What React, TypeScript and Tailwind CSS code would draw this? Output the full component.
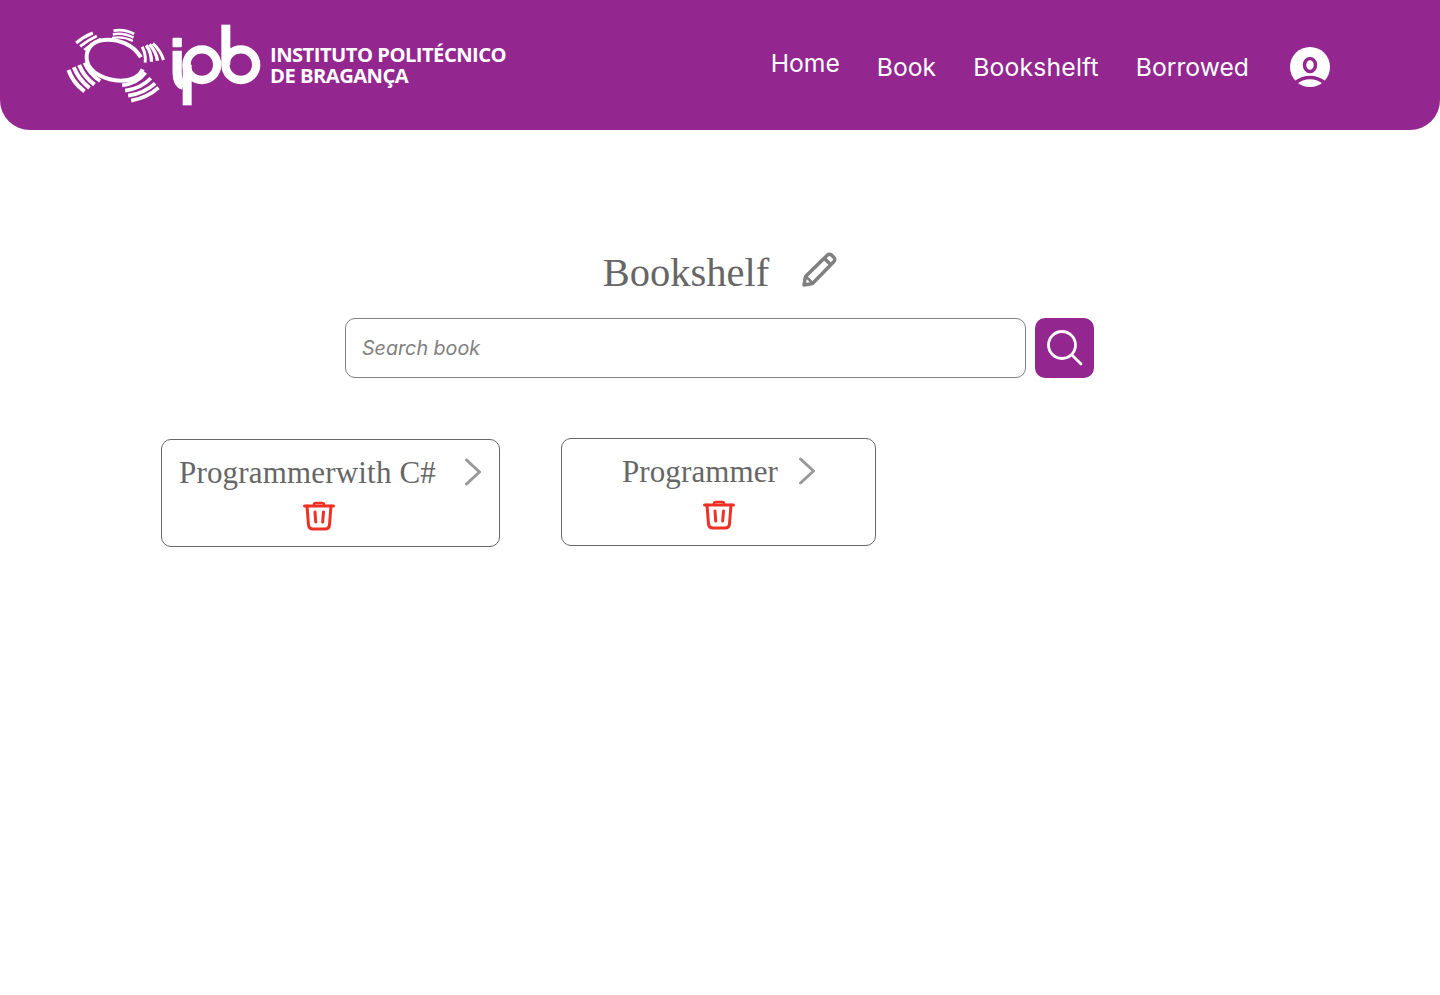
import React from "react";

const sans = "font-['Inter','Liberation_Sans',sans-serif]";
const serif = "font-['Liberation_Serif','DejaVu_Serif',serif]";

function Logo() {
  const stripes = [
    ["M190 62Q222 56 252 72", 8],
    ["M188 73Q220 67 250 83", 8],
    ["M186 84Q218 78 248 93", 7],
    ["M78 99Q100 80 128 69", 9],
    ["M90 109Q114 90 140 78", 9],
    ["M102 120Q125 101 152 87", 8],
    ["M55 180Q68 218 103 244", 12],
    ["M71 172Q85 208 118 234", 12],
    ["M87 165Q101 200 133 224", 12],
    ["M103 158Q118 192 150 213", 11],
    ["M216 226Q262 220 286 188", 11],
    ["M225 242Q272 236 302 205", 11],
    ["M234 257Q282 250 315 220", 11],
    ["M243 272Q292 263 325 233", 11],
    ["M276 110Q288 132 285 158", 9],
    ["M288 106Q304 128 304 155", 10],
    ["M298 103Q318 125 322 152", 10],
    ["M308 100Q332 122 340 150", 9],
  ] as const;
  return (
    <svg viewBox="0 0 650 330" className="h-[110px] w-[217px] shrink-0">
      <g fill="none" stroke="#fff" strokeLinecap="butt">
        <path d="M272 142C250 104 205 86 160 90C122 94 106 122 110 150C116 190 170 212 212 212C245 212 268 198 278 178" strokeWidth="12" />
        {stripes.map(([d, w]) => (
          <path key={d} d={d} strokeWidth={w} />
        ))}
        <path d="M381 122V188C381 212 388 222 400 226" strokeWidth="28" />
        <path d="M411 164V286" strokeWidth="27" />
        <circle cx="455" cy="164" r="46" strokeWidth="25" />
        <path d="M527 44V164" strokeWidth="27" />
        <circle cx="572" cy="164" r="46" strokeWidth="25" />
      </g>
      <rect x="367" y="83" width="28" height="29" rx="3" fill="#fff" />
    </svg>
  );
}

function Avatar() {
  return (
    <svg viewBox="0 0 40 40" className="size-10 shrink-0">
      <circle cx="20" cy="20" r="20" fill="#fff" />
      <ellipse cx="20" cy="18" rx="5.500" ry="6.500" fill="none" stroke="#93278f" strokeWidth="3.500" />
      <path d="M5 36Q12 30.500 20 30.500Q28 30.500 35 36" fill="none" stroke="#93278f" strokeWidth="3.500" />
    </svg>
  );
}

function Trash() {
  return (
    <svg viewBox="0 0 32 30" className="h-[30px] w-8 shrink-0" fill="none" stroke="#ee3124" strokeWidth="3" strokeLinecap="round" strokeLinejoin="round">
      <path d="M1.500 5H30.500" />
      <path d="M11 3.500Q11 2 13 2H19Q21 2 21 3.500" strokeWidth="2.500" />
      <path d="M4 5L5.500 24Q6 28 10 28H22Q26 28 26.500 24L28 5" />
      <path d="M12 11L12.700 21" />
      <path d="M20.500 11L19.700 21" />
    </svg>
  );
}

function Chevron() {
  return (
    <svg viewBox="0 0 18 28" className="h-7 w-[18px] shrink-0" fill="none" stroke="#999" strokeWidth="3" strokeLinecap="round" strokeLinejoin="round">
      <path d="M2.500 2L15.500 14L2.500 26" />
    </svg>
  );
}

function Pencil() {
  return (
    <svg viewBox="0 0 36 36" className="size-9 shrink-0" fill="none" stroke="#808080" strokeWidth="3.500" strokeLinecap="round" strokeLinejoin="round">
      <path d="M3 33L4.500 24.500L26.500 3Q28.500 1.500 30.500 3L33 5.500Q34.500 7.500 33 9.500L11.500 31.500Z" />
      <path d="M23.500 6.500L29.500 12.500" />
      <path d="M5 24.500L11.500 31" strokeWidth="2.500" />
    </svg>
  );
}

function SearchIcon() {
  return (
    <svg viewBox="0 0 36 36" className="size-9" fill="none" stroke="#fff" strokeWidth="2.800" strokeLinecap="round">
      <circle cx="15" cy="15" r="13.500" />
      <path d="M25 25L34 34" />
    </svg>
  );
}

export default function App() {
  return (
    <div className={`min-h-[995px] bg-white ${sans}`}>
      <header className="flex h-[130px] items-center rounded-b-[30px] bg-[#93278f] pl-[50px] pr-[110px] text-white">
        <Logo />
        <div className="ml-[3px] font-['Open_Sans','Noto_Sans',sans-serif] text-[20.200px] font-bold leading-[21px] tracking-[-0.530px]">
          <div>INSTITUTO POLITÉCNICO</div>
          <div>DE BRAGANÇA</div>
        </div>
        <nav className="ml-auto mt-1 flex items-center text-[24.700px] leading-[30px]">
          <a className="mb-2 mr-[37px]">Home</a>
          <a className="mr-[37px]">Book</a>
          <a className="mr-[37px] tracking-[0.200px]">Bookshelft</a>
          <a className="mr-[41px]">Borrowed</a>
          <Avatar />
        </nav>
      </header>

      <main>
        <div className={`mt-[120px] flex h-[46px] items-center justify-center gap-[32px] text-[#666] ${serif}`}>
          <h1 className="text-[40.500px] font-normal leading-[46px]">Bookshelf</h1>
          <div className="mb-[6px]"><Pencil /></div>
        </div>
        <div className="mt-[22px] flex justify-center gap-[9px] pr-px">
          <div className="flex h-[60px] w-[681px] items-center rounded-[10px] border border-[#808080] px-4 pt-px text-[19.700px] italic text-[#808080]">
            Search book
          </div>
          <button className="flex h-[60px] w-[59px] items-center justify-center rounded-[10px] bg-[#93278f]">
            <SearchIcon />
          </button>
        </div>
        <div className={`mt-[60px] flex items-start gap-[61px] pl-[161px] text-[#666] ${serif}`}>
          <div className="mt-px h-[108px] w-[339px] rounded-[10px] border border-[#666] pl-[17px] pr-[17px] pt-[14px]">
            <div className="flex h-[36px] items-center justify-between">
              <span className="mt-[2px] text-[31px] leading-9 tracking-[0.180px]">Programmerwith C#</span>
              <Chevron />
            </div>
            <div className="ml-[124px] mt-[11px]"><Trash /></div>
          </div>
          <div className="h-[108px] w-[315px] rounded-[10px] border border-[#666] pt-[14px]">
            <div className="flex h-[36px] items-center pl-[60px]">
              <span className="mt-[2px] text-[31px] leading-9 tracking-[0.100px]">Programmer</span>
              <span className="ml-5"><Chevron /></span>
            </div>
            <div className="mt-[11px] flex justify-center"><Trash /></div>
          </div>
        </div>
      </main>
    </div>
  );
}
